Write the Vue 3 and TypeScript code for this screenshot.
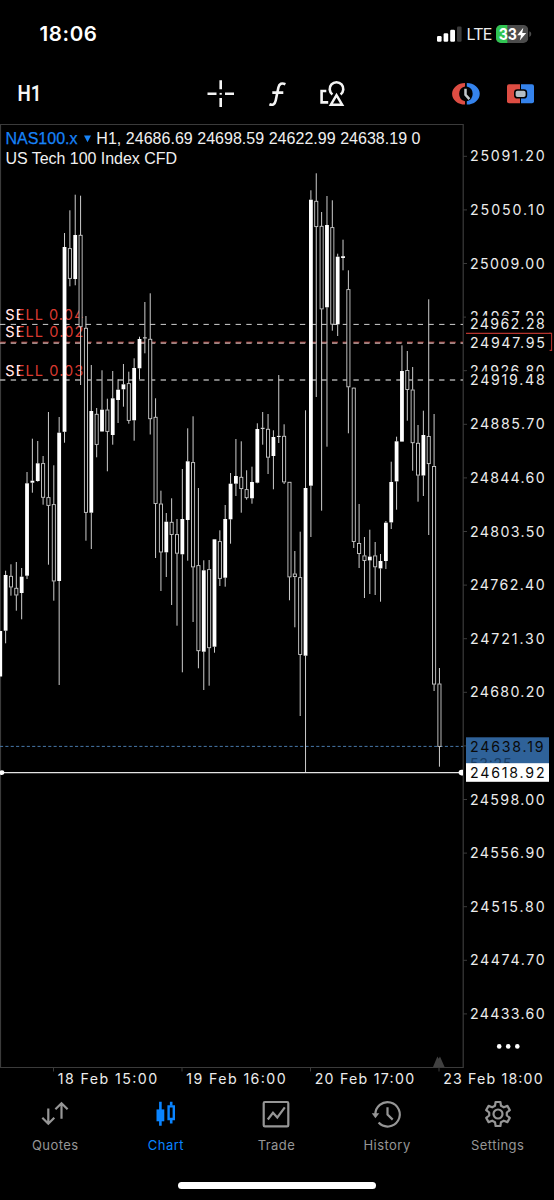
<script setup lang="ts">
interface Candle {
  x: number
  high: number
  top: number
  bottom: number
  low: number
  filled: boolean
}

interface Tab {
  id: string
  label: string
}

const STEP = 5.356

// high, body top, body bottom, low, filled (1) or hollow (0)
const series: number[][] = [
  [631, 631, 676.5, 676.5, 1],
  [570.7, 575, 630.7, 643.3, 1],
  [564.3, 576, 587.3, 595.7, 0],
  [562, 588, 595.3, 610.7, 0],
  [568, 576.7, 593, 619.3, 1],
  [472, 483.3, 575.7, 579, 1],
  [438.7, 480.7, 482.7, 492.7, 1],
  [441, 463.3, 481, 481.7, 1],
  [456, 463.3, 497.6, 504.7, 0],
  [412, 497.3, 505.7, 564.7, 0],
  [465.3, 504.3, 581.3, 600.7, 0],
  [417, 432.7, 581, 685, 1],
  [233, 247, 431.8, 442.7, 1],
  [210.3, 248.3, 278.7, 286.3, 0],
  [194.7, 235, 279, 285.3, 1],
  [195.7, 235, 327, 385, 0],
  [316, 328, 512.7, 540.7, 0],
  [365, 411, 512.7, 549, 1],
  [408, 414, 444.7, 457.3, 0],
  [370.3, 409.7, 431.5, 431.7, 1],
  [398.7, 409.7, 431.7, 471.3, 0],
  [371, 398.3, 435, 444.7, 1],
  [379.3, 389.7, 400, 423, 1],
  [364, 384.3, 389.3, 406.7, 1],
  [371.7, 383.3, 420.7, 423.7, 0],
  [358.3, 368, 420.3, 440.7, 1],
  [336.7, 339, 368.3, 379.3, 1],
  [302, 337.4, 338.4, 353.3, 1],
  [293.3, 339, 419, 434.5, 0],
  [398.3, 417, 503.8, 558, 0],
  [490.7, 503.7, 552.3, 591, 0],
  [513, 521.7, 552.3, 577, 1],
  [498.3, 522, 534.8, 605, 0],
  [519, 534.3, 553.5, 625.7, 0],
  [469, 519, 554.3, 672.3, 1],
  [428.3, 461.3, 520, 560.7, 1],
  [416.3, 462.3, 567.2, 622, 0],
  [488, 565.3, 651, 668.3, 0],
  [560.3, 570.3, 651.7, 690, 1],
  [560, 569.3, 648, 685.7, 0],
  [539.3, 539.3, 646.7, 652.7, 1],
  [530.3, 541.3, 578.7, 586, 0],
  [505, 519, 577.7, 586.7, 1],
  [473, 483.7, 519.3, 543.7, 1],
  [439, 476, 483.7, 496, 1],
  [441.3, 477, 488.9, 512.7, 0],
  [470.3, 489.3, 498, 499.7, 0],
  [466.7, 482, 498.3, 503.7, 1],
  [423.3, 429, 482.7, 483.3, 1],
  [412, 427.8, 428.8, 444.7, 1],
  [414, 429, 457.5, 474, 0],
  [430.3, 437, 456, 489.3, 1],
  [375, 435.9, 436.9, 443, 1],
  [424.3, 436, 482.2, 484, 0],
  [482, 482, 577.2, 600.3, 0],
  [551, 573.7, 576.9, 627.3, 0],
  [531.7, 577.3, 654.8, 716, 0],
  [410.3, 488, 655.7, 772, 1],
  [190.3, 199.7, 485.7, 537, 1],
  [173.3, 201, 226.9, 397, 0],
  [212, 226, 309.2, 510.7, 0],
  [196, 225, 307.3, 446.7, 1],
  [200.3, 227.3, 324.5, 330.7, 0],
  [253.7, 256.7, 324.3, 336, 1],
  [239.7, 256.2, 258, 270.3, 1],
  [270.3, 289.3, 387.1, 433.3, 0],
  [387.6, 387.8, 541.8, 548, 0],
  [504, 543.2, 553.8, 568, 0],
  [537, 555.6, 560.8, 598, 0],
  [529.7, 556.6, 560.4, 594, 1],
  [542, 555.6, 567.1, 595, 0],
  [554, 561, 568.4, 601.7, 1],
  [521, 522.7, 561, 569, 1],
  [461.7, 482, 522.4, 529, 1],
  [436.7, 441.3, 481.4, 509.7, 1],
  [345.3, 371, 441.6, 441.7, 1],
  [351, 370.2, 389.8, 420.7, 0],
  [367, 389.7, 443, 470.7, 0],
  [425, 443, 475.4, 501.7, 0],
  [410.7, 435, 475.5, 496, 1],
  [299.3, 436.2, 463.9, 535, 0],
  [414, 466.2, 684.4, 691, 0],
  [668, 683.7, 746.7, 766.7, 0],
]

const candles: Candle[] = series.map((s, i) => ({
  x: +(0.25 + i * STEP).toFixed(2),
  high: s[0],
  top: s[1],
  bottom: s[2],
  low: s[3],
  filled: s[4] === 1,
}))

const gridPrices = Array.from({ length: 17 }, (_, i) => ({
  text: (25091.2 - i * 41.1).toFixed(2),
  y: +(156.3 + i * 53.6).toFixed(2),
}))

const times = [
  { tick: 53.5, text: '18 Feb 15:00' },
  { tick: 182, text: '19 Feb 16:00' },
  { tick: 310.5, text: '20 Feb 17:00' },
  { tick: 439, text: '23 Feb 18:00' },
]

const orders = [
  { text: 'SELL 0.04', y: 319.5 },
  { text: 'SELL 0.02', y: 337.2 },
  { text: 'SELL 0.03', y: 375.7 },
]

const levels = [
  { text: '24962.28', y: 324.3 },
  { text: '24947.95', y: 343 },
  { text: '24919.48', y: 380 },
]

const tabs: Tab[] = [
  { id: 'quotes', label: 'Quotes' },
  { id: 'chart', label: 'Chart' },
  { id: 'trade', label: 'Trade' },
  { id: 'history', label: 'History' },
  { id: 'settings', label: 'Settings' },
]
</script>

<template>
  <div class="phone">
    <header class="status">
      <span class="clock">18:06</span>
      <div class="status-right">
        <svg class="signal" width="26" height="18" viewBox="436 24 26 18">
          <rect x="437" y="35" width="4.6" height="5.8" rx="1.2" fill="#fff" />
          <rect x="443.6" y="32.2" width="4.6" height="8.6" rx="1.2" fill="#fff" />
          <rect x="450.2" y="28.8" width="4.8" height="12" rx="1.2" fill="#fff" />
          <rect x="457" y="25.6" width="4.6" height="15.2" rx="1.2" fill="#3a3a3a" />
        </svg>
        <span class="lte">LTE</span>
        <svg class="battery" width="36" height="18" viewBox="0 0 36 18">
          <defs>
            <clipPath id="cell"><rect width="32.3" height="18" rx="5" /></clipPath>
          </defs>
          <g clip-path="url(#cell)">
            <rect width="32.3" height="18" fill="#4c4c4c" />
            <rect width="11.3" height="18" fill="#30c552" />
          </g>
          <path d="M33.3 6.3 q2 .8 2 2.8 t-2 2.8z" fill="#4c4c4c" />
          <text x="2.7" y="15" textLength="18.3" lengthAdjust="spacingAndGlyphs" class="charge">33</text>
          <path d="M27.3 2.8 L21.2 10.2 H25 L23.8 15.6 L30.2 8 H26.2 Z" fill="#fff" />
        </svg>
      </div>
    </header>

    <nav class="toolbar">
      <svg class="frame" width="40" height="32" viewBox="16 78 40 32">
        <text x="17.6" y="101.2" textLength="24" lengthAdjust="spacingAndGlyphs">H1</text>
      </svg>
      <svg class="cross" width="30" height="32" viewBox="206 78 30 32">
        <g stroke="#f4f4f4" stroke-width="2.6">
          <path d="M207.5 93.8h9M225 93.8h9M220.7 80.3v9M220.7 98v9" />
          <path d="M219.6 93.8h2.2" stroke-width="1.8" />
        </g>
      </svg>
      <svg class="func" width="22" height="32" viewBox="266 78 22 32">
        <path d="M285.4 84.2c-3.4-1.6-6.2-.6-7 3.2l-2.7 13.2c-.8 3.8-3 5.1-6.3 3.6M272.3 92.6h11" fill="none" stroke="#f4f4f4" stroke-width="2.6" />
      </svg>
      <svg class="shapes" width="28" height="32" viewBox="318 78 28 32">
        <g fill="none" stroke="#f4f4f4" stroke-width="2.6">
          <path d="M326.3 91h-4.7v11.4h6.6" />
          <path d="M332.4 94.5a6.8 6.8 0 1 1 8.2 0" />
          <path d="M336.5 95.2 342.2 104.8h-11.4z" stroke-width="2.4" />
        </g>
      </svg>
      <svg class="trade-clock" width="30" height="26" viewBox="450 81 30 26">
        <path d="M465 83a12.8 10.7 0 0 0 0 21.6v-3.4a7.6 7.6 0 0 1 0-14.8z" fill="#dd4d43" />
        <path d="M466.8 83a12.8 10.7 0 0 1 0 21.6v-3.4a7.6 7.6 0 0 0 0-14.8z" fill="#3583ec" />
        <path d="M465.5 88.8v6l3.9 4.4" fill="none" stroke="#c3c8cb" stroke-width="2.5" />
      </svg>
      <svg class="one-click" width="30" height="26" viewBox="505 81 30 26">
        <path d="M509 84.3h11v19h-11a2 2 0 0 1-2-2v-15a2 2 0 0 1 2-2z" fill="#dd4d43" />
        <path d="M521 84.3h11a2 2 0 0 1 2 2v15a2 2 0 0 1-2 2h-11z" fill="#3583ec" />
        <rect x="514.8" y="90" width="11.6" height="7.8" rx="2.6" fill="#b4bdc3" stroke="#000" stroke-width="1.6" />
      </svg>
    </nav>

    <main>
      <svg class="chart" width="554" height="966" viewBox="0 124 554 966">
        <defs>
          <clipPath id="plot"><rect x="0" y="124" width="463" height="943" /></clipPath>
          <clipPath id="lead"><rect x="0" y="290" width="20.2" height="100" /></clipPath>
          <clipPath id="timer"><rect x="466" y="737" width="83" height="26.3" /></clipPath>
        </defs>

        <g stroke="#3b3b3b" fill="none">
          <path d="M.5 1067.5V124.5H463.2V1067.5Z" stroke-width="1.2" />
          <path v-for="g in gridPrices" :key="g.text" :d="`M463 ${g.y}h4`" />
          <path v-for="t in times" :key="t.text" :d="`M${t.tick} 1067v4.5`" />
        </g>
        <path d="M433 1067l4.4-10.6 1.3 2.4 1.3-2.4 4.6 10.6z" fill="#404040" />

        <g class="title">
          <text x="5.5" y="143.6" textLength="72" class="symbol">NAS100.x</text>
          <path d="M84 135.6h7l-3.5 6.6z" fill="#1783f7" />
          <text x="96.3" y="143.6" textLength="324.2">H1, 24686.69 24698.59 24622.99 24638.19 0</text>
          <text x="5.5" y="163.7" textLength="171.5">US Tech 100 Index CFD</text>
        </g>

        <g class="order">
          <text v-for="o in orders" :key="o.text" x="5.3" :y="o.y" textLength="78" fill="#d93a30">{{ o.text }}</text>
          <g clip-path="url(#lead)">
            <text v-for="o in orders" :key="o.text" x="5.3" :y="o.y" textLength="78" fill="#fbeeee">{{ o.text }}</text>
          </g>
        </g>

        <path d="M0 342.2H463" stroke="#84302c" stroke-width="1.4" stroke-dasharray="6 4.71" />
        <path d="M0 324.4H463" stroke="#cfcfcf" stroke-dasharray="5.36 5.35" />
        <path d="M0 343.1H463" stroke="#cdb2b1" stroke-width="1.4" stroke-dasharray="5.36 5.35" />
        <path d="M0 380H463" stroke="#a8a8a8" stroke-width="1.3" stroke-dasharray="5.36 5.35" />
        <path d="M0 746.4H463" stroke="#4777a8" stroke-dasharray="3.1 2.26" />

        <g clip-path="url(#plot)">
          <g v-for="(c, i) in candles" :key="i">
            <path :d="`M${c.x} ${c.high}V${c.top}M${c.x} ${c.bottom}V${c.low}`" class="wick" />
            <rect v-if="c.filled" :x="c.x - 1.9" :y="c.top" width="3.8" :height="c.bottom - c.top" fill="#fff" />
            <rect v-else :x="c.x - 1.55" :y="c.top + 0.3" width="3.1" :height="c.bottom - c.top - 0.6" class="hollow" />
          </g>
        </g>

        <path d="M0 772.6H462" stroke="#e4e4e4" stroke-width="1.1" />
        <circle cx="2" cy="772.6" r="2.4" fill="#fff" />
        <path d="M463 769.8v5.6h-1.6a2.8 2.8 0 0 1 0-5.6z" fill="#fff" />

        <g class="axis">
          <text v-for="g in gridPrices" :key="g.text" x="470" :y="g.y + 5" textLength="74.6">{{ g.text }}</text>
          <path d="M466 333.4H551.6V350.4H549.6" fill="none" stroke="#b4332c" stroke-width="1.1" />
          <g v-for="l in levels" :key="l.text">
            <rect x="466" :y="l.y - 8.6" width="83" height="17.2" fill="#000" />
            <text x="470" :y="l.y + 5" textLength="74.8">{{ l.text }}</text>
          </g>
          <path d="M466 333.4H551" stroke="#b4332c" stroke-width="1.1" />
          <rect x="466" y="737.3" width="83" height="27" fill="#2f6299" />
          <text x="470" y="751.7" textLength="73.6" class="dark">24638.19</text>
          <g clip-path="url(#timer)">
            <text x="470" y="769" textLength="41.5" class="dim">53:25</text>
          </g>
          <rect x="466" y="763.2" width="83" height="18.6" fill="#fff" />
          <text x="470" y="777.8" textLength="74.6" class="dark">24618.92</text>
          <text v-for="t in times" :key="t.text" :x="t.tick + 4.2" y="1083.5" textLength="99.4">{{ t.text }}</text>
        </g>
        <g fill="#fff">
          <circle cx="499.2" cy="1046.4" r="2.3" />
          <circle cx="508.2" cy="1046.4" r="2.3" />
          <circle cx="517.3" cy="1046.4" r="2.3" />
        </g>
      </svg>
    </main>

    <footer class="tabs">
      <a v-for="tab in tabs" :key="tab.id" class="tab" :class="{ active: tab.id === 'chart' }">
        <svg width="32" height="32" viewBox="-16 -16 32 32" fill="none" stroke="currentColor" stroke-width="2.2">
          <g v-if="tab.id === 'quotes'">
            <path d="M-6.7-5.5V9.5M-12.7 3.8L-6.7 9.8L-.7 3.8M6.5 4.8V-10.5M.4-4.7L6.5-10.8L12.6-4.7" />
          </g>
          <g v-else-if="tab.id === 'chart'" stroke-width="2.6">
            <path d="M-5.6-12.3V11.7M5.2-12.3v4M5.2 5v4.5" />
            <path d="M-9.5-4.6h7.8V7.3h-7.8z" fill="currentColor" stroke="none" />
            <path d="M2.6-7.6h5.2V5h-5.2z" stroke-width="2.4" />
          </g>
          <g v-else-if="tab.id === 'trade'">
            <rect x="-12.3" y="-12" width="24.6" height="24.4" rx="1.2" />
            <path d="M-8.2 5.5L-3-1.2L1.3 3.5L8.8-6.6" />
          </g>
          <g v-else-if="tab.id === 'history'">
            <path d="M-11.6 1A12.2 12.2 0 1 1-8.4 8.6" />
            <path d="M-15.2-.7h7.5L-11.6 4.3z" fill="currentColor" stroke="none" />
            <path d="M.5-6.7V.5L5.7 5.6" />
          </g>
          <g v-else stroke-linejoin="round">
            <path d="M-2.4-12H2.4L3-8.2 5.8-6.7 9.4-8.1 11.8-3.9 8.8-1.5V1.5L11.8 3.9 9.4 8.1 5.8 6.7 3 8.2 2.4 12H-2.4L-3 8.2-5.8 6.7-9.4 8.1-11.8 3.9-8.8 1.5V-1.5L-11.8-3.9-9.4-8.1-5.8-6.7-3-8.2Z" />
            <circle r="4.5" />
          </g>
        </svg>
        <span>{{ tab.label }}</span>
      </a>
    </footer>
    <div class="home"></div>
  </div>
</template>

<style>
body {
  background: #000;
}
</style>

<style scoped>
.phone {
  width: 554px;
  height: 1200px;
  background: #000;
  color: #fff;
  font-family: Inter, "Liberation Sans", sans-serif;
  display: flex;
  flex-direction: column;
  overflow: hidden;
}
svg {
  display: block;
  flex: none;
}
.status {
  height: 66px;
  box-sizing: border-box;
  padding: 1px 22px 0 39.5px;
  display: flex;
  justify-content: space-between;
  align-items: center;
}
.clock {
  font-size: 20.5px;
  font-weight: 600;
  letter-spacing: 0.6px;
}
.status-right {
  display: flex;
  align-items: center;
}
.lte {
  font-size: 16px;
  width: 34px;
  box-sizing: border-box;
  padding-left: 4.5px;
  letter-spacing: -0.8px;
  color: #eee;
}
.charge {
  font-size: 16px;
  font-weight: 700;
  fill: #fff;
}
.toolbar {
  height: 58px;
  display: flex;
  align-items: center;
  box-sizing: border-box;
  padding: 0 19px 2px 16px;
}
.frame {
  margin-right: auto;
}
.frame text {
  font: 600 22px Roboto, sans-serif;
  fill: #f6f6f6;
}
.cross {
  margin-right: 30px;
}
.func {
  margin-right: 30px;
}
.shapes {
  margin-right: 104px;
}
.trade-clock {
  margin-right: 25px;
}
.title text {
  font: 16px "Liberation Sans", Arial, sans-serif;
  fill: #f0f0f0;
}
.title .symbol {
  fill: #1783f7;
  stroke: #1783f7;
  stroke-width: 0.25;
}
.order text {
  font-size: 14.5px;
}
.axis text {
  font-size: 14.2px;
  fill: #ececec;
}
.axis .dark {
  fill: #0a0a0a;
}
.axis .dim {
  fill: #193c62;
}
.wick {
  stroke: #cdcdcd;
  stroke-width: 1;
  fill: none;
}
.hollow {
  stroke: #cdcdcd;
  stroke-width: 0.9;
  fill: #000;
}
.tabs {
  display: flex;
  width: 553px;
  height: 92px;
  box-sizing: border-box;
  padding-top: 8px;
}
.tab {
  flex: 1;
  display: flex;
  flex-direction: column;
  align-items: center;
  color: #969696;
  font-size: 13px;
  letter-spacing: 0.45px;
}
.tab span {
  margin-top: 7px;
  line-height: 17px;
}
.active {
  color: #0a84ff;
}
.home {
  width: 198px;
  height: 7px;
  border-radius: 4px;
  background: #fff;
  align-self: center;
}
</style>
